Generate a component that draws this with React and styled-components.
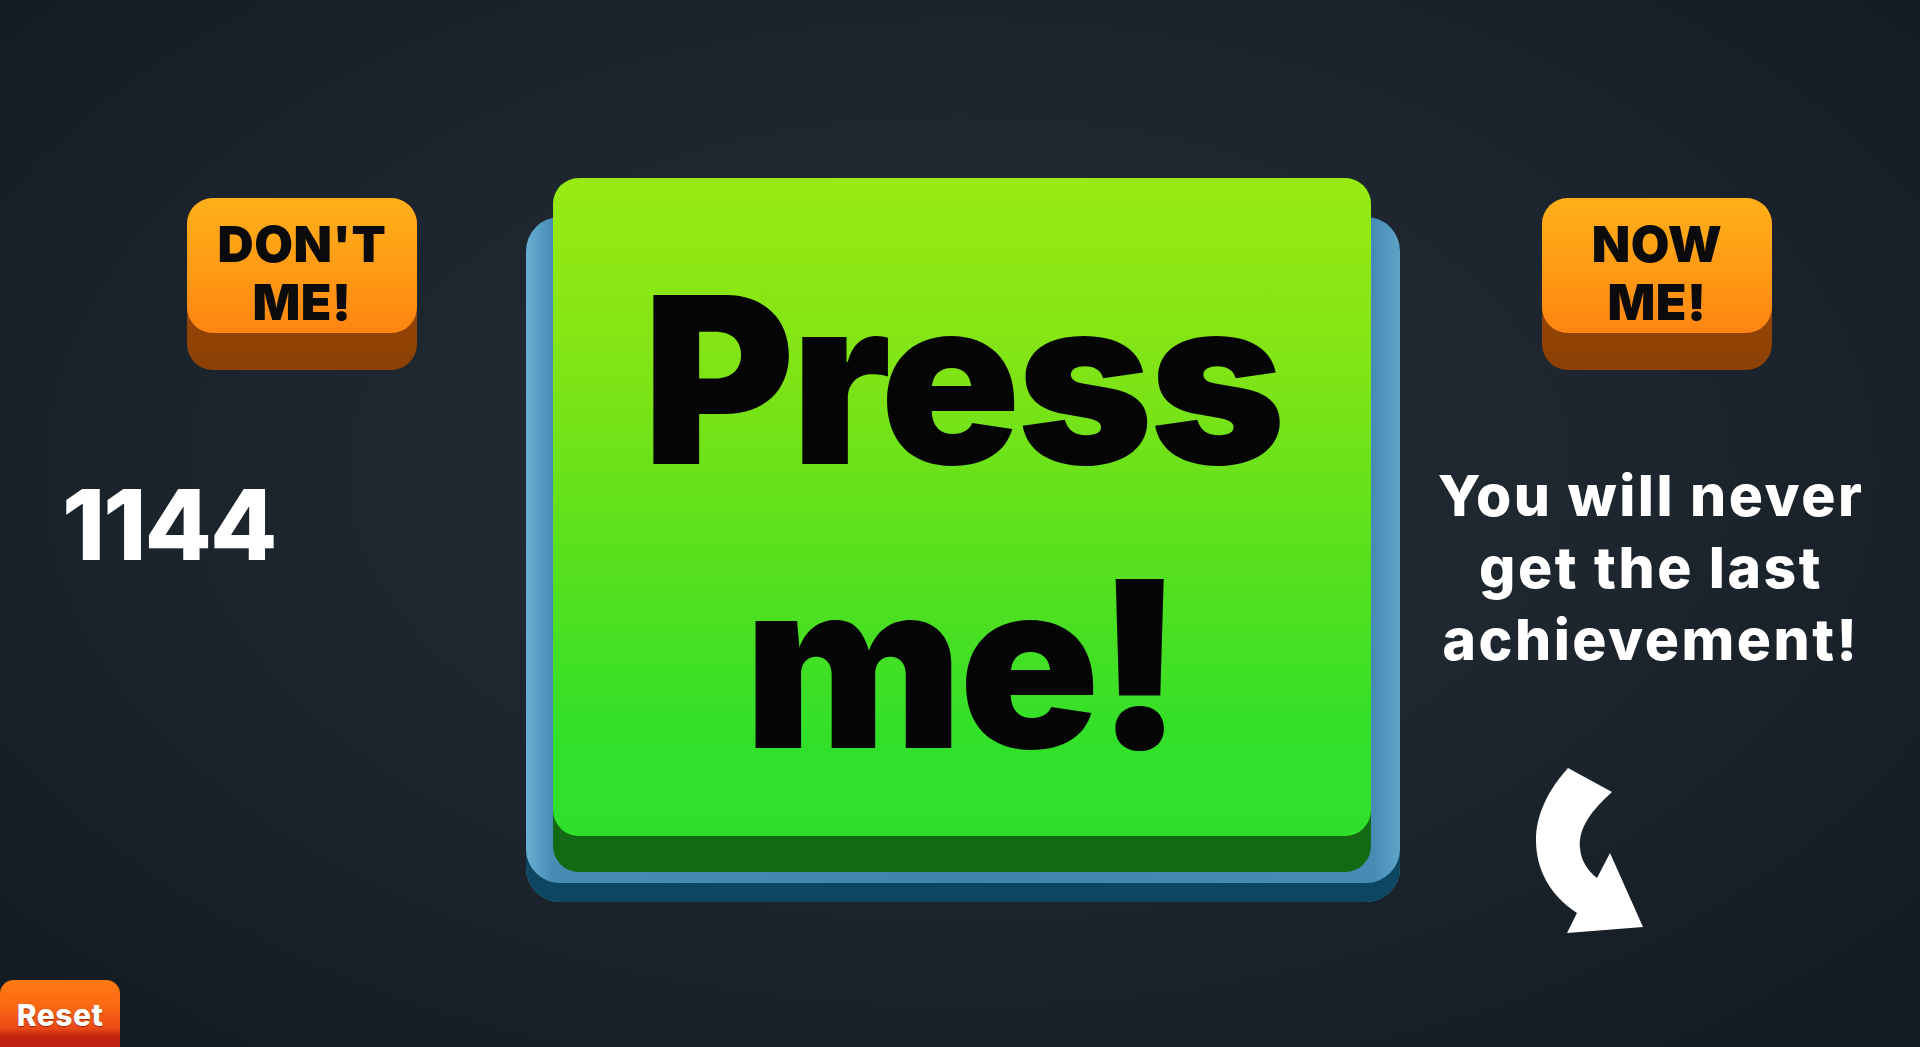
import React, { useState } from "react"
import styled, { createGlobalStyle } from "styled-components"

const GlobalStyle = createGlobalStyle`
    html, body {
        margin: 0;
        padding: 0;
        background: #161e27;
    }
    * {
        box-sizing: border-box;
    }
`

const Page = styled.div`
    width: 100%;
    height: 100vh;
    overflow: hidden;
    display: flex;
    flex-direction: column;
    background: radial-gradient(ellipse 70% 75% at 50% 45%, #252d36 0%, #1d252e 50%, #131a22 100%);
    font-family: Inter, "Liberation Sans", sans-serif;
`

const Main = styled.div`
    height: 980px;
    flex-shrink: 0;
    display: grid;
    grid-template-columns: 526px 874px 1fr;
    align-items: start;
`

const SideColumn = styled.div`
    display: flex;
    flex-direction: column;
    align-items: flex-start;
    padding-top: 198px;
    padding-left: ${(p) => p.$padLeft}px;
`

const SmallButton = styled.button`
    width: 230px;
    height: 172px;
    padding: 0;
    border: none;
    outline: none;
    border-radius: 26px;
    background: linear-gradient(#a24f08, #8c4004);
    margin-left: ${(p) => p.$offset || 0}px;
    cursor: pointer;
    display: flex;
    flex-direction: column;
`

const SmallFace = styled.div`
    height: 135px;
    border-radius: 26px;
    background: linear-gradient(#ffb01a 0%, #ff9a14 55%, #ff8412 100%);
    display: flex;
    flex-direction: column;
    align-items: center;
    justify-content: center;
    padding-top: 14px;
    color: #0b0b0b;
    font-family: Inter, "Liberation Sans", sans-serif;
    font-weight: 900;
    font-size: 50px;
    line-height: 58px;
    letter-spacing: 0.5px;
`

const Score = styled.div`
    margin-top: 106px;
    color: #ffffff;
    font-weight: 800;
    font-size: 98px;
    line-height: 1;
    letter-spacing: -2px;
`

const Well = styled.div`
    margin-top: 217px;
    height: 685px;
    border-radius: 34px;
    padding: 0 29px 0 27px;
    background: linear-gradient(90deg, #6aafd3 0%, #468cb4 3%, #3f84aa 50%, #468cb4 97%, #5fa3c8 100%);
    box-shadow: inset 0 -19px 0 #0d4660;
`

const BigButton = styled.button`
    width: 100%;
    height: 694px;
    margin-top: -39px;
    padding: 0;
    border: none;
    outline: none;
    border-radius: 26px;
    background: #146a12;
    cursor: pointer;
    display: flex;
    flex-direction: column;
`

const BigFace = styled.div`
    height: 658px;
    border-radius: 26px;
    background: linear-gradient(#99ea12 0%, #7fe416 30%, #55e01e 60%, #32e02a 85%, #2fe02a 100%);
    display: flex;
    flex-direction: column;
    align-items: center;
    padding-top: 60px;
    color: #050505;
    font-family: Inter, "Liberation Sans", sans-serif;
    font-weight: 900;
    font-size: 232px;
    line-height: 284px;
    letter-spacing: -4px;
`

const Caption = styled.div`
    width: 510px;
    margin-top: 90px;
    margin-left: -146px;
    text-align: center;
    color: #ffffff;
    font-weight: 800;
    font-size: 57px;
    line-height: 72px;
    letter-spacing: 2.5px;
`

const Arrow = styled.svg`
    margin-top: 84px;
    margin-left: -12px;
`

const Footer = styled.div`
    flex: 1;
    display: flex;
    align-items: flex-start;
`

const ResetButton = styled.button`
    width: 120px;
    height: 80px;
    padding: 0;
    border: none;
    outline: none;
    border-radius: 14px;
    background: linear-gradient(#ff7a12 0%, #fb6a14 30%, #ec4a16 60%, #c42210 70%, #b81a0c 100%);
    display: flex;
    justify-content: center;
    padding-top: 17px;
    color: #ffffff;
    font-family: Inter, "Liberation Sans", sans-serif;
    font-weight: 800;
    font-size: 30px;
    line-height: 36px;
    letter-spacing: 0.5px;
    text-shadow: 0 1px 1px rgba(90, 10, 0, 0.6);
    cursor: pointer;
`

function CurvedArrow() {
    return (
        <Arrow width="120" height="180" viewBox="0 0 120 180">
            <path
                d="M38 8 L82 32 C62 50 48 68 50 88 C51 100 57 110 67 118 L80 93 L113 167 L37 173 L47 153 C20 135 6 110 6 80 C6 55 18 30 38 8 Z"
                fill="#ffffff"
            />
        </Arrow>
    )
}

export default function App() {
    const [count, setCount] = useState(1144)

    return (
        <Page>
            <GlobalStyle />
            <Main>
                <SideColumn $padLeft={62}>
                    <SmallButton $offset={125}>
                        <SmallFace>
                            <span>DON'T</span>
                            <span>ME!</span>
                        </SmallFace>
                    </SmallButton>
                    <Score>{count}</Score>
                </SideColumn>
                <Well>
                    <BigButton onClick={() => setCount(count + 1)}>
                        <BigFace>
                            <span>Press</span>
                            <span>me!</span>
                        </BigFace>
                    </BigButton>
                </Well>
                <SideColumn $padLeft={142}>
                    <SmallButton>
                        <SmallFace>
                            <span>NOW</span>
                            <span>ME!</span>
                        </SmallFace>
                    </SmallButton>
                    <Caption>
                        You will never
                        <br />
                        get the last
                        <br />
                        achievement!
                    </Caption>
                    <CurvedArrow />
                </SideColumn>
            </Main>
            <Footer>
                <ResetButton onClick={() => setCount(0)}>Reset</ResetButton>
            </Footer>
        </Page>
    )
}
